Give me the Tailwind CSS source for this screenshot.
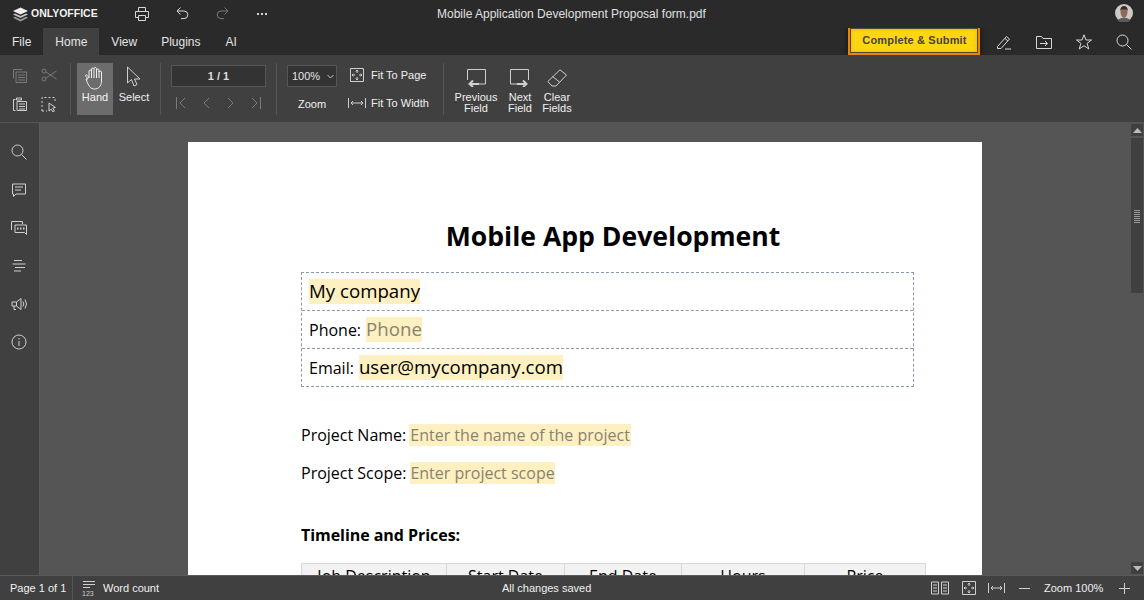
<!DOCTYPE html>
<html lang="en">
<head>
<meta charset="UTF-8">
<title>Mobile Application Development Proposal form.pdf</title>
<script src="https://cdn.jsdelivr.net/npm/@tailwindcss/browser@4"></script>
</head>
<body class="w-[1144px] h-[600px] overflow-hidden font-['Liberation_Sans',Arial,sans-serif] text-[11px] text-[#f0f0f0] bg-[#404040]">
<div class="flex flex-col h-[600px]">

  <!-- Title bar -->
  <header class="relative flex items-center h-[28px] bg-[#2a2a2a] shrink-0">
    <div class="flex items-center w-[134px] pl-[12px] gap-[2px]">
      <svg width="17" height="15" viewBox="0 0 17 15"><path d="M8.5 0.5 16 4 8.5 7.5 1 4Z" fill="#f0f0f0"/><path d="M3 6.4 1 7.4 8.5 11 16 7.4 14 6.4 8.5 9Z" fill="#c4c4c4"/><path d="M3 9.8 1 10.8 8.5 14.4 16 10.8 14 9.8 8.5 12.4Z" fill="#9a9a9a"/></svg>
      <span class="font-bold text-[10.5px] text-[#f2f2f2]">ONLYOFFICE</span>
    </div>
    <div class="flex items-center gap-[24px]">
      <svg width="16" height="16" viewBox="0 0 16 16" fill="none" stroke="#d8d8d8"><path d="M4.5 5V1.5h7V5M4.5 11.5h-3v-6h13v6h-3M4.5 9.5h7v5h-7Z"/></svg>
      <svg width="16" height="16" viewBox="0 0 16 16" fill="none" stroke="#d8d8d8"><path d="M6.5 1.500 3 5l3.500 3.500M3 5h7a3.800 3.800 0 0 1 0 7.600H7"/></svg>
      <svg width="16" height="16" viewBox="0 0 16 16" fill="none" stroke="#777"><path d="M10.500 1.500 14 5l-3.500 3.500M14 5H7a3.800 3.800 0 0 0 0 7.600h3"/></svg>
      <svg width="16" height="16" viewBox="0 0 16 16" fill="#d8d8d8"><rect x="3" y="7" width="2" height="2"/><rect x="7" y="7" width="2" height="2"/><rect x="11" y="7" width="2" height="2"/></svg>
    </div>
    <div class="absolute left-[437px] top-[7px] text-[12px] leading-[14px] text-[#e0e0e0]">Mobile Application Development Proposal form.pdf</div>
    <svg class="absolute left-[1115px] top-[4px]" width="18" height="18" viewBox="0 0 18 18"><circle cx="9" cy="9" r="9" fill="#cfcac6"/><ellipse cx="9" cy="8" rx="3.500" ry="5.500" fill="#8e6a58"/><path d="M5 7q.5-5 4-5t4 5l-1-1.500H6Z" fill="#3d2e28"/><path d="M2.500 16q6.500-5 13 0a9 9 0 0 1-13 0Z" fill="#5e5a58"/></svg>
  </header>

  <!-- Tabs row -->
  <nav class="flex items-stretch justify-between h-[27px] bg-[#2a2a2a] shrink-0">
    <div class="flex items-stretch text-[12px] leading-[28px] text-[#e4e4e4]">
      <span class="pl-[12px] pr-[12px]">File</span>
      <span class="px-[12px] w-[56px] bg-[#404040] text-center">Home</span>
      <span class="pl-[12px] pr-[12px]">View</span>
      <span class="pl-[12px] pr-[12px]">Plugins</span>
      <span class="pl-[13px]">AI</span>
    </div>
    <div class="flex items-center">
      <div class="flex items-center justify-center w-[132px] h-[29px] -mt-[2px] pl-[1px] border-[2px] border-[#f08300] bg-[#ffd60f] shadow-[inset_0_0_0_1px_#4a4a3a,inset_0_0_3px_2px_rgba(150,110,0,.2),0_1px_6px_rgba(0,0,0,.6)] text-[11px] font-bold tracking-[0.17px] text-[#444]">Complete &amp; Submit</div>
      <div class="flex items-center gap-[24px] ml-[16px] mr-[12px]">
        <svg width="16" height="16" viewBox="0 0 16 16" fill="none" stroke="#d8d8d8"><path d="M1.500 12.500 10.500 2.500l3 2.500-8.500 9.500h-3.500ZM9 4.500l3 2.500M9 15h6"/></svg>
        <svg width="16" height="16" viewBox="0 0 16 16" fill="none" stroke="#d8d8d8"><path d="M.5 14.500v-12h5l1.500 2h8.500v10ZM4 9.500h7.500M9 7l2.500 2.500L9 12"/></svg>
        <svg width="16" height="16" viewBox="0 0 16 16" fill="none" stroke="#d8d8d8"><path d="M8 .8 10 6h5.500l-4.400 3.400 1.700 5.600L8 11.700 3.200 15l1.700-5.600L.5 6H6Z"/></svg>
        <svg width="16" height="16" viewBox="0 0 16 16" fill="none" stroke="#d8d8d8"><circle cx="6.500" cy="6.500" r="5.500"/><path d="m10.500 10.500 5 5"/></svg>
      </div>
    </div>
  </nav>

  <!-- Toolbar -->
  <section class="flex items-stretch h-[68px] bg-[#404040] border-b border-[#555] shrink-0 pt-[8px] pb-[7px]">
    <div class="grid grid-cols-2 content-start w-[71px] pl-[12px] pt-[5px] gap-y-[12px] border-r border-[#555]">
      <svg width="16" height="16" viewBox="0 0 16 16" fill="none" stroke="#7a7a7a"><path d="M1.500 10.500V1.500h9M4 4h10.500v10.500H4ZM6 7h7M6 9.500h7M6 12h7"/></svg>
      <svg width="16" height="14" viewBox="0 0 16 14" fill="none" stroke="#7a7a7a"><circle cx="3" cy="3" r="2"/><circle cx="3" cy="11" r="2"/><path d="M5 4 15.500 11M5 10 15.500 3"/></svg>
      <svg width="16" height="16" viewBox="0 0 16 16" fill="none" stroke="#cfcfcf"><path d="M3.500 14.500h-2v-11h2M4.500 2h5v2h-5ZM5 5.500h9.500v9H5ZM7 8h6M7 10.500h6M7 13h6"/></svg>
      <svg width="16" height="16" viewBox="0 0 16 16" fill="none" stroke="#cfcfcf"><path stroke-dasharray="2 2" d="M1 15V1.500h13V6M1 15h5"/><path d="M8 7l6.500 4.500-2.800.7 1.800 2.800-1.500 1-1.800-2.800L8 15Z"/></svg>
    </div>
    <div class="flex ml-[6px] w-[84px] border-r border-[#555]">
      <div class="flex flex-col items-center w-[36px] bg-[#6c6c6c] text-[#f4f4f4] pt-[3px]">
        <svg width="20" height="24" viewBox="0 0 20 24" fill="none" stroke="#f0f0f0"><path d="M3 13c-1-2-3-3-2.300-4 1-1 3 2 3.300 3V5a1.300 1.300 0 0 1 2.500 0V3a1.300 1.300 0 0 1 2.500 0v-.500a1.300 1.300 0 0 1 2.500 0V4a1.300 1.300 0 0 1 2.500 0v2a1.300 1.300 0 0 1 2.500 0v9c0 5-3 8-7 8s-6-3-8.500-10ZM6.500 5v7M9 3v9M11.500 3v9M14 5v7"/></svg>
        <span class="mt-[1px] leading-[13px]">Hand</span>
      </div>
      <div class="flex flex-col items-center w-[42px] pt-[3px]">
        <svg width="16" height="24" viewBox="0 0 16 24" fill="none" stroke="#cfcfcf"><path d="M1.500 1v16l4-3.500L8 20l3-1.500-2.500-5.500H14Z"/></svg>
        <span class="mt-[1px] leading-[13px]">Select</span>
      </div>
    </div>
    <div class="flex flex-col items-center w-[116px] border-r border-[#555] pt-[2px]">
      <div class="w-[95px] h-[22px] bg-[#333] border border-[#555] text-center font-bold text-[11px] leading-[20px] text-[#ddd]">1 / 1</div>
      <div class="flex gap-[9px] mt-[9px]">
        <svg width="16" height="14" viewBox="0 0 16 14" fill="none" stroke="#7a7a7a"><path d="M3.500 1v12M12 2 7 7l5 5"/></svg>
        <svg width="16" height="14" viewBox="0 0 16 14" fill="none" stroke="#7a7a7a"><path d="M11 2 6 7l5 5"/></svg>
        <svg width="16" height="14" viewBox="0 0 16 14" fill="none" stroke="#7a7a7a"><path d="M5 2l5 5-5 5"/></svg>
        <svg width="16" height="14" viewBox="0 0 16 14" fill="none" stroke="#7a7a7a"><path d="M12.500 1v12M4 2l5 5-5 5"/></svg>
      </div>
    </div>
    <div class="flex w-[167px] pl-[10px] border-r border-[#555]">
      <div class="flex flex-col items-center w-[50px] pt-[2px]">
        <div class="flex items-center w-[50px] h-[22px] bg-[#333] border border-[#555] pl-[4px] text-[11px] text-[#e6e6e6]">100%<svg class="ml-[7px]" width="7" height="5" viewBox="0 0 7 5" fill="none" stroke="#ccc"><path d="M.5 1 3.500 4 6.500 1"/></svg></div>
        <span class="mt-[11px] leading-[13px]">Zoom</span>
      </div>
      <div class="flex flex-col ml-[11px]">
        <div class="flex items-center h-[24px]">
          <svg class="ml-[2px]" width="14" height="14" viewBox="0 0 14 14" fill="none" stroke="#cfcfcf"><path d="M.5.5h13v13H.5ZM7 2v3M5.800 3.500 7 2l1.200 1.500M7 12V9M5.800 10.500 7 12l1.200-1.500M2 7h3M3.500 5.800 2 7l1.500 1.200M12 7H9M10.500 5.800 12 7l-1.500 1.200"/></svg>
          <span class="ml-[7px]">Fit To Page</span>
        </div>
        <div class="flex items-center h-[24px] mt-[4px]">
          <svg width="18" height="12" viewBox="0 0 18 12" fill="none" stroke="#cfcfcf"><path d="M.5 1v10M17.500 1v10M3 6h12M5 4 3 6l2 2M13 4l2 2-2 2"/></svg>
          <span class="ml-[5px]">Fit To Width</span>
        </div>
      </div>
    </div>
    <div class="flex ml-[10px] text-center leading-[11px]">
      <div class="flex flex-col items-center w-[44px] pt-[6px]">
        <svg width="20" height="18" viewBox="0 0 20 18" fill="none" stroke="#cfcfcf"><path d="M1.500 11V.5h18v14.500H9"/><path stroke-width="2" d="M13 15H4M7 11.500 3.500 15 7 18"/></svg>
        <span class="mt-[5px]">Previous<br>Field</span>
      </div>
      <div class="flex flex-col items-center w-[44px] pt-[6px]">
        <svg width="20" height="18" viewBox="0 0 20 18" fill="none" stroke="#cfcfcf"><path d="M18.500 11V.5H.5v14.500H11"/><path stroke-width="2" d="M7 15h9M13 11.500l3.500 3.500-3.500 3"/></svg>
        <span class="mt-[5px]">Next<br>Field</span>
      </div>
      <div class="flex flex-col items-center w-[30px] pt-[6px]">
        <svg width="20" height="18" viewBox="0 0 20 18" fill="none" stroke="#cfcfcf"><path d="M13 .8 19.500 6 9 17H5L.8 12.500ZM5.500 7.500l7 5.500"/></svg>
        <span class="mt-[5px]">Clear<br>Fields</span>
      </div>
    </div>
  </section>

  <!-- Body -->
  <main class="flex flex-1 min-h-0">
    <aside class="flex flex-col items-center w-[40px] shrink-0 bg-[#404040] border-r border-[#5a5a5a] pt-[21px] gap-[22px] pr-[1px]">
      <svg width="16" height="16" viewBox="0 0 16 16" fill="none" stroke="#cfcfcf"><circle cx="6.500" cy="6.500" r="5.500"/><path d="m10.500 10.500 5 5"/></svg>
      <svg width="16" height="16" viewBox="0 0 16 16" fill="none" stroke="#cfcfcf"><path d="M1.500 2h13v10H5L2.500 14.500V12h-1ZM4 5h8M4 8h6"/></svg>
      <svg width="16" height="16" viewBox="0 0 16 16" fill="none" stroke="#cfcfcf"><path d="M.5 10V1.500h11v2.500M4 5h11.500v9.500l-2-2H4Z"/><path d="M6 8.500h1.500M9 8.500h1.500M12 8.500h1.500" stroke-width="2"/></svg>
      <svg width="16" height="16" viewBox="0 0 16 16" fill="none" stroke="#cfcfcf"><path d="M3 2.500h8M1.500 6h13M4 9.500h10M3 13h7"/></svg>
      <svg width="16" height="16" viewBox="0 0 16 16" fill="none" stroke="#cfcfcf"><path d="M1 6h4.500v4H1ZM5.500 6 10 2.500v11L5.500 10M3 10v3.500h2M12 5.500q1.500 2.500 0 5M14 3.500q3 4.500 0 9"/></svg>
      <svg width="16" height="16" viewBox="0 0 16 16" fill="none" stroke="#cfcfcf"><circle cx="8" cy="8" r="7"/><path d="M8 7v5M8 4v1.500"/></svg>
    </aside>
    <div class="flex-1 min-w-0 bg-[#555] overflow-hidden pt-[19px] pl-[148px]">
      <article class="w-[794px] h-[600px] bg-white pt-[74px] pl-[113px] font-['Open_Sans','Noto_Sans',sans-serif] text-[16px] text-black">
        <h1 class="w-[624px] text-center font-bold text-[26.6px] leading-[40px]">Mobile App Development</h1>
        <div class="w-[613px] mt-[16px] border border-dashed border-[#8b98ad] text-[16px]">
          <div class="flex items-center h-[38px] pl-[7px] border-b border-dashed border-[#8b98ad]"><span class="bg-[#fef0c0] text-[18.67px] leading-[23px] pb-[2px]">My company</span></div>
          <div class="flex items-center h-[38px] pl-[7px] border-b border-dashed border-[#8b98ad]">Phone:<span class="ml-[5px] bg-[#fef0c0] text-[18.67px] leading-[23px] pb-[2px] text-[#8a8270]">Phone</span></div>
          <div class="flex items-center h-[37px] pl-[7px]">Email:<span class="ml-[5px] bg-[#fef0c0] text-[18.67px] leading-[23px] pb-[2px]">user@mycompany.com</span></div>
        </div>
        <div class="flex items-center h-[24px] mt-[36px]">Project Name:<span class="ml-[3px] bg-[#fef0c0] text-[#8a8270] text-[16px] leading-[22px] px-px">Enter the name of the project</span></div>
        <div class="flex items-center h-[24px] mt-[14px]">Project Scope:<span class="ml-[4px] bg-[#fef0c0] text-[#8a8270] text-[16px] leading-[22px]">Enter project scope</span></div>
        <h2 class="font-bold text-[16px] leading-[22px] mt-[39px] tracking-[-0.05px]">Timeline and Prices:</h2>
        <div class="flex w-[625px] h-[40px] mt-[17px] border border-[#d8d8d8] bg-[#f2f2f2] text-center leading-[25px]">
          <div class="w-[145px] border-r border-[#d8d8d8]">Job Description</div>
          <div class="w-[118px] border-r border-[#d8d8d8]">Start Date</div>
          <div class="w-[117px] border-r border-[#d8d8d8]">End Date</div>
          <div class="w-[123px] border-r border-[#d8d8d8]">Hours</div>
          <div class="flex-1">Price</div>
        </div>
      </article>
    </div>
    <!-- Scrollbar -->
    <div class="flex flex-col w-[14px] shrink-0 bg-[#555] pt-[1px]">
      <div class="flex items-center justify-center w-[12px] h-[12px] ml-[1px] bg-[#404040]"><svg width="9" height="5"><path d="M4.500 0 9 5H0Z" fill="#bbb"/></svg></div>
      <div class="relative w-[12px] h-[155px] ml-[1px] mt-[2px] bg-[#404040]">
        <div class="absolute left-[3px] top-[72px] w-[6px] h-[13px] bg-[repeating-linear-gradient(#999_0_1px,#404040_1px_2px)]"></div>
      </div>
      <div class="flex-1"></div>
      <div class="flex items-center justify-center w-[12px] h-[12px] ml-[1px] bg-[#404040] mb-[1px]"><svg width="9" height="5"><path d="M0 0H9L4.500 5Z" fill="#bbb"/></svg></div>
    </div>
  </main>

  <!-- Status bar -->
  <footer class="relative flex items-center h-[25px] bg-[#404040] border-t border-[#5a5a5a] shrink-0">
    <div class="flex items-center w-[73px] h-full pl-[10px] border-r border-[#555] whitespace-nowrap">Page 1 of 1</div>
    <svg class="ml-[9px]" width="14" height="16" viewBox="0 0 14 16" fill="none" stroke="#cfcfcf"><path d="M1 1.500h12M1 4.500h12M1 7.500h7"/><text x="0" y="15.500" font-size="7" fill="#cfcfcf" stroke="none" font-family="Liberation Sans">123</text></svg>
    <span class="ml-[7px]">Word count</span>
    <span class="absolute left-[502px] top-[5px] leading-[14px]">All changes saved</span>
    <div class="flex items-center ml-auto mr-[14px]">
      <svg width="18" height="14" viewBox="0 0 18 14" fill="none" stroke="#cfcfcf"><path d="M.5 1h7v12h-7ZM10.500 1h7v12h-7ZM2 4h4M2 7h4M2 10h4M12 4h4M12 7h4M12 10h4"/></svg>
      <svg class="ml-[13px]" width="14" height="14" viewBox="0 0 14 14" fill="none" stroke="#cfcfcf"><path d="M.5.5h13v13H.5ZM7 2v3M5.800 3.500 7 2l1.200 1.500M7 12V9M5.800 10.500 7 12l1.200-1.500M2 7h3M3.500 5.800 2 7l1.500 1.200M12 7H9M10.500 5.800 12 7l-1.500 1.200"/></svg>
      <svg class="ml-[12px]" width="17" height="12" viewBox="0 0 17 12" fill="none" stroke="#cfcfcf"><path d="M.5 1v10M16.500 1v10M3 6h11M5 4 3 6l2 2M12 4l2 2-2 2"/></svg>
      <svg class="ml-[14px]" width="11" height="11" viewBox="0 0 11 11" stroke="#cfcfcf"><path d="M0 5.500h11"/></svg>
      <span class="ml-[14px] w-[59px] text-center whitespace-nowrap">Zoom 100%</span>
      <svg class="ml-[16px]" width="11" height="11" viewBox="0 0 11 11" stroke="#cfcfcf"><path d="M0 5.500h11M5.500 0v11"/></svg>
    </div>
  </footer>
</div>
</body>
</html>
